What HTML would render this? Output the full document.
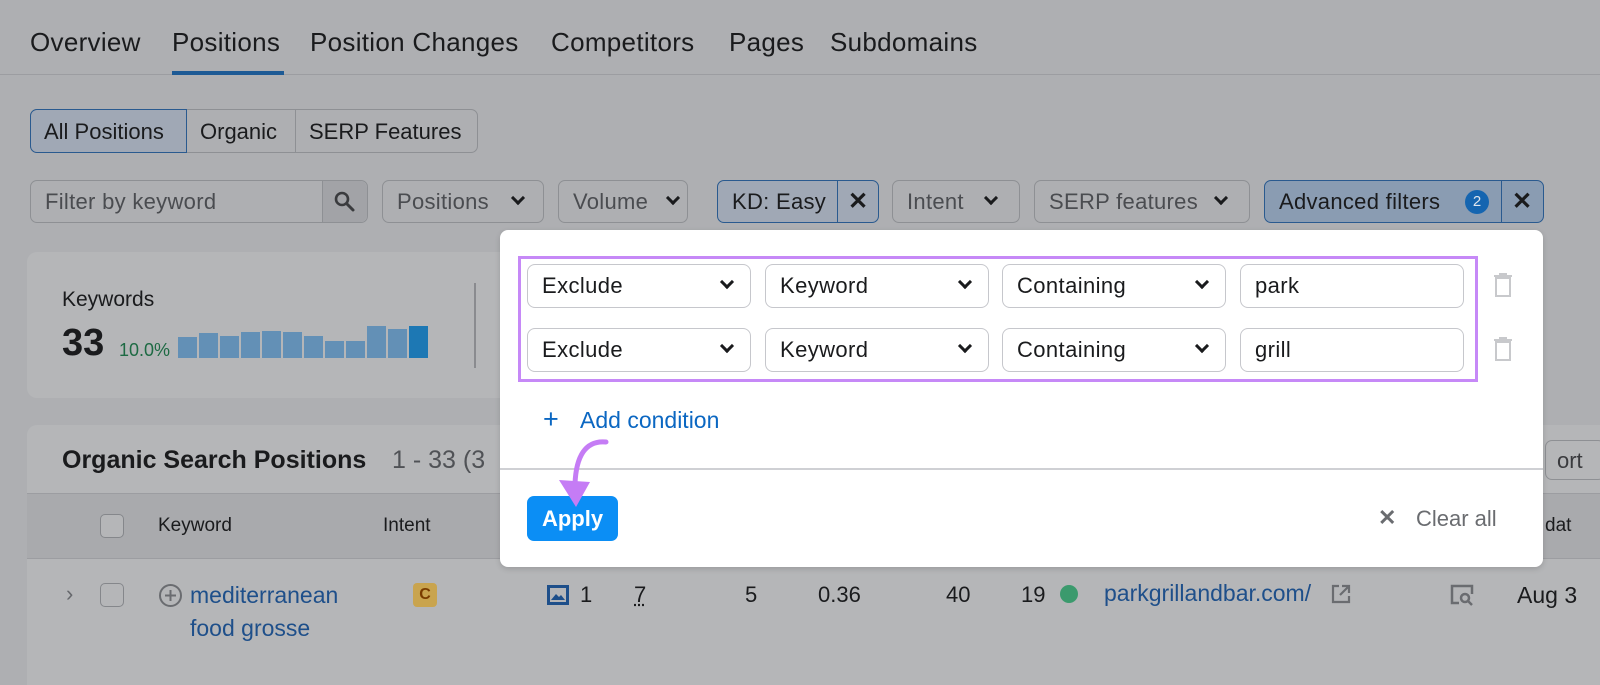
<!DOCTYPE html>
<html><head><meta charset="utf-8"><style>
*{box-sizing:border-box;margin:0;padding:0}
body{width:1600px;height:659px;overflow:hidden;background:#aeafb2;font-family:"Liberation Sans",sans-serif;color:#1a1b1d;position:relative}
.a{position:absolute;white-space:nowrap}
.nav{font-size:26px;top:27px;letter-spacing:0.3px}
.btn{position:absolute;border:1px solid #8e9094;border-radius:7px;height:43px;font-size:22px;letter-spacing:0.3px;display:flex;align-items:center;padding-left:14px;color:#4a4c50}
.chev{position:absolute;width:10px;height:10px;border-right:3px solid #1a1b1d;border-bottom:3px solid #1a1b1d;transform:rotate(45deg)}
.sel{position:absolute;width:224px;height:44px;border:1px solid #c6c7cc;border-radius:8px;background:#fff;font-size:22px;letter-spacing:0.4px;display:flex;align-items:center;padding-left:14px;color:#1a1b1d}
.card{position:absolute;background:#b5b6b8;border-radius:10px}
.x{position:absolute;font-size:24px;font-weight:bold}
</style></head><body>
<div class="a nav" style="left:30px">Overview</div>
<div class="a nav" style="left:172px">Positions</div>
<div class="a nav" style="left:310px">Position Changes</div>
<div class="a nav" style="left:551px">Competitors</div>
<div class="a nav" style="left:729px">Pages</div>
<div class="a nav" style="left:830px">Subdomains</div>
<div class="a" style="left:0;top:74px;width:1600px;height:1px;background:#9c9da1"></div>
<div class="a" style="left:172px;top:71px;width:112px;height:4px;background:#1d5a95"></div>

<div class="a" style="left:30px;top:109px;width:448px;height:44px;border:1px solid #8e9094;border-radius:7px"></div>
<div class="a" style="left:30px;top:109px;width:157px;height:44px;border:1px solid #2a5a8f;border-radius:7px 0 0 7px;background:#a0a8b5"></div>
<div class="a" style="left:295px;top:110px;width:1px;height:42px;background:#8e9094"></div>
<div class="a" style="left:44px;top:119px;font-size:22px">All Positions</div>
<div class="a" style="left:200px;top:119px;font-size:22px">Organic</div>
<div class="a" style="left:309px;top:119px;font-size:22px">SERP Features</div>

<div class="btn" style="left:30px;top:180px;width:338px">Filter by keyword</div>
<div class="a" style="left:322px;top:181px;width:45px;height:41px;background:#a2a3a7;border-left:1px solid #8e9094;border-radius:0 7px 7px 0"></div>
<svg class="a" style="left:333px;top:190px" width="24" height="24" viewBox="0 0 24 24"><circle cx="9" cy="9" r="6" fill="none" stroke="#3a3b3e" stroke-width="2.6"/><path d="M13.5 13.5L20 20" stroke="#3a3b3e" stroke-width="3" stroke-linecap="round"/></svg>
<div class="btn" style="left:382px;top:180px;width:162px">Positions</div><div class="chev" style="left:513px;top:193px"></div>
<div class="btn" style="left:558px;top:180px;width:130px">Volume</div><div class="chev" style="left:668px;top:193px"></div>
<div class="btn" style="left:717px;top:180px;width:162px;border-color:#2a5a8f;background:#a0a8b5;color:#1a1b1d">KD: Easy</div>
<div class="a" style="left:837px;top:181px;width:1px;height:41px;background:#2a5a8f"></div>
<div class="x" style="left:848px;top:187px">✕</div>
<div class="btn" style="left:892px;top:180px;width:128px">Intent</div><div class="chev" style="left:986px;top:193px"></div>
<div class="btn" style="left:1034px;top:180px;width:216px">SERP features</div><div class="chev" style="left:1216px;top:193px"></div>
<div class="btn" style="left:1264px;top:180px;width:280px;border-color:#2a5a8f;background:#8a9cb2;color:#1a1b1d">Advanced filters</div>
<div class="a" style="left:1465px;top:190px;width:24px;height:24px;border-radius:50%;background:#1565b0;color:#dfe6ee;font-size:15px;text-align:center;line-height:24px">2</div>
<div class="a" style="left:1501px;top:181px;width:1px;height:41px;background:#2a5a8f"></div>
<div class="x" style="left:1512px;top:187px">✕</div>

<div class="card" style="left:27px;top:252px;width:560px;height:146px"></div>
<div class="a" style="left:62px;top:288px;font-size:21px">Keywords</div>
<div class="a" style="left:62px;top:322px;font-size:38px;font-weight:bold">33</div>
<div class="a" style="left:119px;top:340px;font-size:18px;color:#1d6a43">10.0%</div>
<div class="a" style="left:178px;top:325px;display:flex;align-items:flex-end;gap:2px;height:33px">
<div style="width:19px;height:21px;background:#6390b6"></div><div style="width:19px;height:25px;background:#6390b6"></div><div style="width:19px;height:22px;background:#6390b6"></div><div style="width:19px;height:26px;background:#6390b6"></div><div style="width:19px;height:27px;background:#6390b6"></div><div style="width:19px;height:26px;background:#6390b6"></div><div style="width:19px;height:22px;background:#6390b6"></div><div style="width:19px;height:17px;background:#6390b6"></div><div style="width:19px;height:17px;background:#6390b6"></div><div style="width:19px;height:32px;background:#6390b6"></div><div style="width:19px;height:29px;background:#6390b6"></div><div style="width:19px;height:32px;background:#1d78b4"></div></div>
<div class="a" style="left:474px;top:283px;width:2px;height:85px;background:#8a8b8f"></div>

<div class="card" style="left:27px;top:425px;width:1600px;height:260px;border-radius:10px 0 0 0"></div>
<div class="a" style="left:27px;top:493px;width:1600px;height:66px;background:#a9aaad;border-top:1px solid #9c9da1;border-bottom:1px solid #9c9da1"></div>
<div class="a" style="left:62px;top:446px;font-size:25px;font-weight:bold">Organic Search Positions</div>
<div class="a" style="left:392px;top:446px;font-size:25px;color:#505256">1 - 33 (3</div>
<div class="a" style="left:1545px;top:440px;width:60px;height:40px;border:1px solid #8e9094;border-radius:7px"></div>
<div class="a" style="left:1557px;top:448px;font-size:22px;color:#3a3b3e">ort</div>
<div class="a" style="left:100px;top:514px;width:24px;height:24px;border:1.5px solid #85878b;border-radius:5px;background:#b5b6b8"></div>
<div class="a" style="left:158px;top:515px;font-size:19px">Keyword</div>
<div class="a" style="left:383px;top:515px;font-size:19px">Intent</div>
<div class="a" style="left:1545px;top:515px;font-size:19px">dat</div>
<div class="a" style="left:66px;top:581px;font-size:22px;color:#66686c">›</div>
<div class="a" style="left:100px;top:583px;width:24px;height:24px;border:1.5px solid #85878b;border-radius:5px"></div>
<svg class="a" style="left:158px;top:583px" width="25" height="25"><circle cx="12.5" cy="12.5" r="10.5" fill="none" stroke="#6a6c70" stroke-width="2"/><path d="M12.5 7v11M7 12.5h11" stroke="#6a6c70" stroke-width="2"/></svg>
<div class="a" style="left:190px;top:579px;font-size:23px;color:#1e4f8a;line-height:33px">mediterranean<br>food grosse</div>
<div class="a" style="left:413px;top:583px;width:24px;height:24px;background:#c9a44e;border-radius:4px;color:#7a3d00;font-weight:bold;font-size:16px;text-align:center;line-height:24px">C</div>
<svg class="a" style="left:547px;top:585px" width="22" height="20"><rect x="1.5" y="1.5" width="19" height="17" fill="none" stroke="#1e4f8a" stroke-width="3"/><path d="M4 15l5-6 3 3 2-2 4 5z" fill="#1e4f8a"/></svg>
<div class="a" style="left:580px;top:582px;font-size:22px">1</div>
<div class="a" style="left:634px;top:582px;font-size:22px;text-decoration:underline dotted">7</div>
<div class="a" style="left:745px;top:582px;font-size:22px">5</div>
<div class="a" style="left:818px;top:582px;font-size:22px">0.36</div>
<div class="a" style="left:946px;top:582px;font-size:22px">40</div>
<div class="a" style="left:1021px;top:582px;font-size:22px">19</div>
<div class="a" style="left:1060px;top:585px;width:18px;height:18px;border-radius:50%;background:#3b9a6d"></div>
<div class="a" style="left:1104px;top:580px;font-size:23px;color:#1e4f8a">parkgrillandbar.com/</div>
<svg class="a" style="left:1330px;top:583px" width="22" height="22"><path d="M9 3H3v16h16v-6M12 3h7v7M19 3l-9 9" fill="none" stroke="#6a6c70" stroke-width="2.2"/></svg>
<svg class="a" style="left:1450px;top:583px" width="24" height="24"><path d="M9 20H2V3h20v8" fill="none" stroke="#6a6c70" stroke-width="2.5"/><circle cx="15" cy="15" r="4" fill="none" stroke="#6a6c70" stroke-width="2.5"/><path d="M18 18l4 4" stroke="#6a6c70" stroke-width="2.5"/></svg>
<div class="a" style="left:1517px;top:582px;font-size:23px">Aug 3</div>

<div class="a" style="left:500px;top:230px;width:1043px;height:337px;background:#fff;border-radius:8px;box-shadow:0 2px 6px rgba(0,0,0,.15)"></div>
<div class="a" style="left:518px;top:256px;width:960px;height:126px;border:3px solid #c689f7"></div>
<div class="sel" style="left:527px;top:264px">Exclude</div><div class="chev" style="left:722px;top:277px"></div>
<div class="sel" style="left:765px;top:264px">Keyword</div><div class="chev" style="left:960px;top:277px"></div>
<div class="sel" style="left:1002px;top:264px">Containing</div><div class="chev" style="left:1197px;top:277px"></div>
<div class="sel" style="left:1240px;top:264px">park</div>
<div class="sel" style="left:527px;top:328px">Exclude</div><div class="chev" style="left:722px;top:341px"></div>
<div class="sel" style="left:765px;top:328px">Keyword</div><div class="chev" style="left:960px;top:341px"></div>
<div class="sel" style="left:1002px;top:328px">Containing</div><div class="chev" style="left:1197px;top:341px"></div>
<div class="sel" style="left:1240px;top:328px">grill</div>
<svg class="a" style="left:1493px;top:273px" width="20" height="24"><path d="M1 3h18M7 3V1h6v2M3 5h14v18H3z" fill="none" stroke="#c8c9cc" stroke-width="2"/></svg>
<svg class="a" style="left:1493px;top:337px" width="20" height="24"><path d="M1 3h18M7 3V1h6v2M3 5h14v18H3z" fill="none" stroke="#c8c9cc" stroke-width="2"/></svg>
<div class="a" style="left:543px;top:404px;font-size:27px;color:#0b67c2">+</div>
<div class="a" style="left:580px;top:407px;font-size:23px;color:#0b67c2">Add condition</div>
<div class="a" style="left:500px;top:468px;width:1043px;height:2px;background:#cfd0d4"></div>
<div class="a" style="left:527px;top:496px;width:91px;height:45px;background:#0b8ef5;border-radius:7px;color:#fff;font-size:22px;font-weight:bold;text-align:center;line-height:45px">Apply</div>
<div class="a" style="left:1378px;top:505px;font-size:22px;color:#6a6c70;font-weight:bold">✕</div>
<div class="a" style="left:1416px;top:506px;font-size:22px;color:#6a6c70">Clear all</div>
<svg class="a" style="left:540px;top:432px" width="80" height="80"><path d="M66 10C45 8 36 25 35 52" fill="none" stroke="#c57cf5" stroke-width="5" stroke-linecap="round"/><path d="M19 48L36 75L50 50Z" fill="#c57cf5"/></svg>
</body></html>
